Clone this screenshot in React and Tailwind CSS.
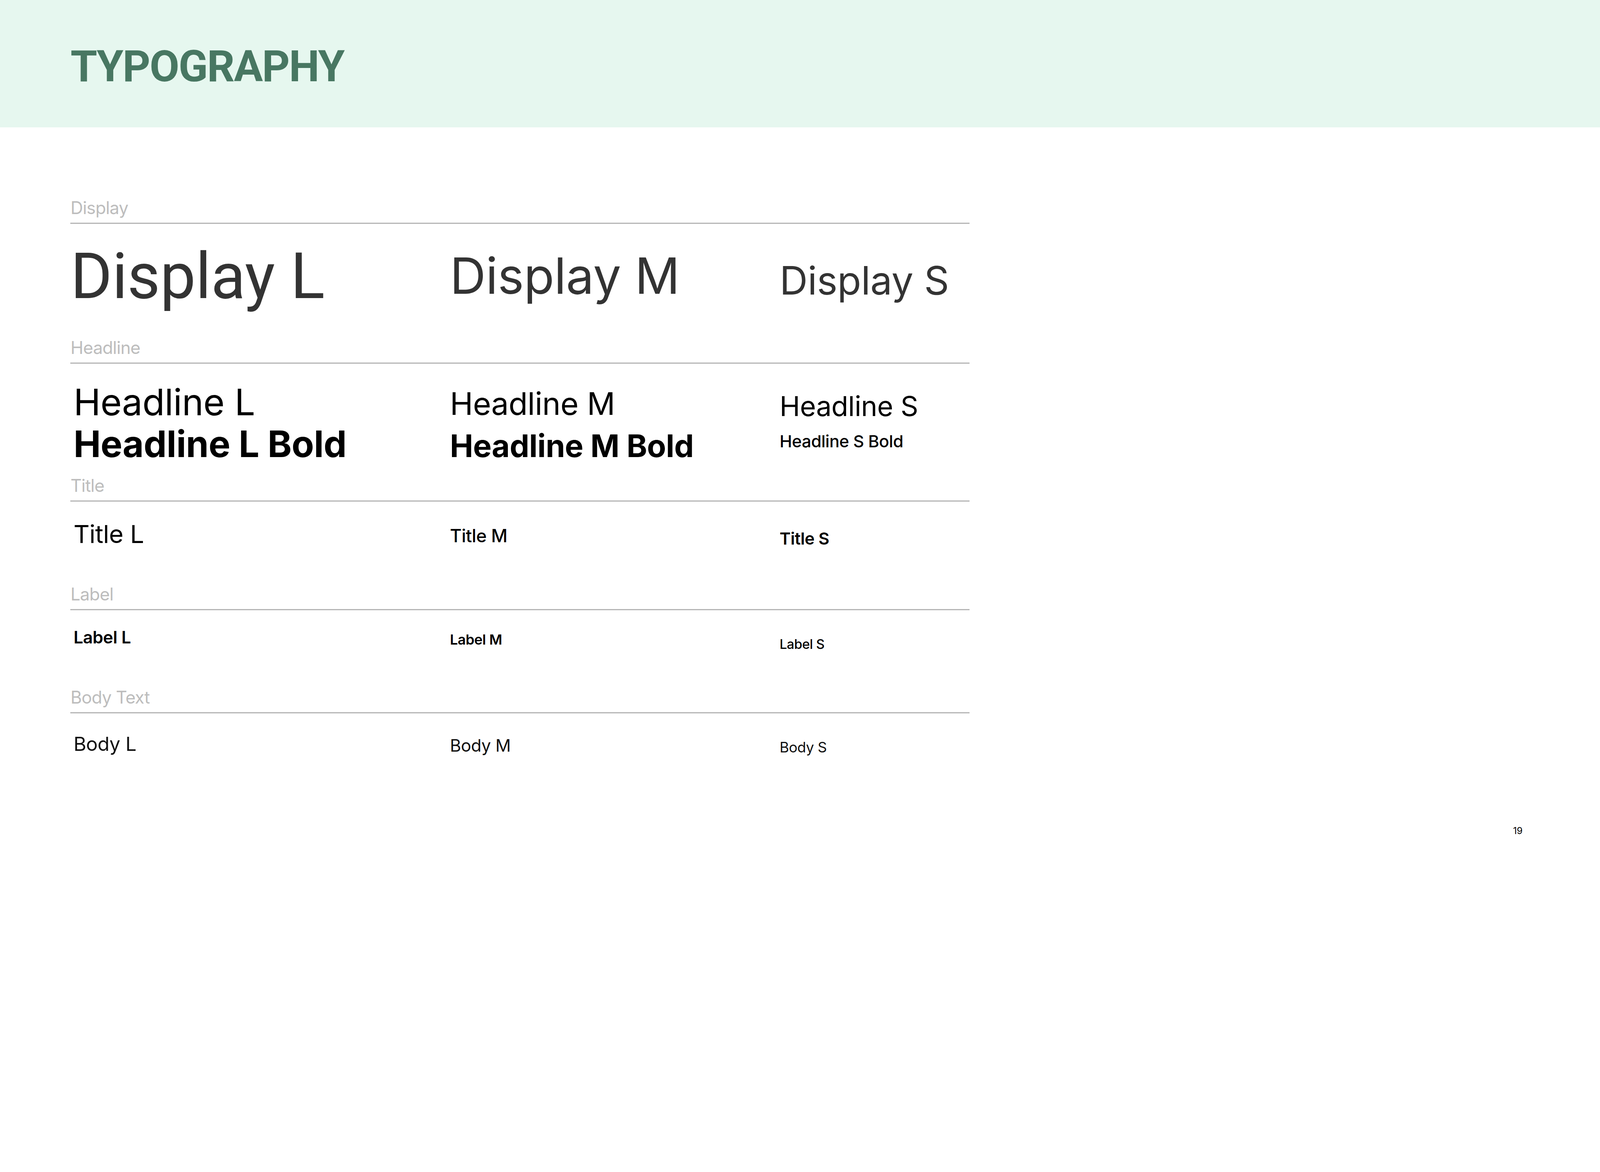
export default function App() {
  const inter = { fontFamily: "Inter, 'Noto Sans', sans-serif" };
  const z = typeof window !== "undefined" ? document.documentElement.clientWidth / 5334 : 1;
  const Label = ({ children }) => (
    <div>
      <div className="text-[58px] leading-none text-[#bdbdbd] tracking-[-0.02em]" style={inter}>{children}</div>
      <div className="mt-[20px] h-[4px] w-[2997px] bg-[#b5b5b5]" />
    </div>
  );
  return (
    <div className="w-[5334px] h-[3000px] bg-white overflow-hidden" style={{ ...inter, zoom: z }}>
      <div className="h-[425px] bg-[#e6f7ef] pl-[235px] pt-[150px]">
        <div className="text-[144px] leading-none font-bold text-[#487762] tracking-[-0.02em]" style={{ fontFamily: "Roboto, sans-serif" }}>TYPOGRAPHY</div>
      </div>
      <div className="pl-[235px]">
        <div className="pt-[239px]" />
        <Label>Display</Label>
        <div className="flex h-[384px] text-[#333333] tracking-[-0.03em]">
          <div className="w-[1265px] pt-[70px] text-[212px] leading-none" style={{ fontFamily: "Roboto, sans-serif" }}>Display L</div>
          <div className="w-[1099px] pt-[92px] text-[166px] leading-none">Display M</div>
          <div className="pt-[124px] text-[130px] leading-none">Display S</div>
        </div>
        <Label>Headline</Label>
        <div className="flex h-[378px] text-black tracking-[-0.04em]">
          <div className="w-[1265px] pl-[10px] pt-[68px] text-[122px] leading-none">
            <div>Headline L</div>
            <div className="mt-[17px] font-bold">Headline L Bold</div>
          </div>
          <div className="w-[1099px] pt-[82px] text-[104px] leading-none">
            <div>Headline M</div>
            <div className="mt-[37px] font-bold">Headline M Bold</div>
          </div>
          <div className="pt-[97px] leading-none">
            <div className="text-[92px]">Headline S</div>
            <div className="mt-[42px] text-[56px] font-medium">Headline S Bold</div>
          </div>
        </div>
        <Label>Title</Label>
        <div className="flex h-[280px] text-black leading-none tracking-[-0.04em]">
          <div className="w-[1265px] pl-[10px] pt-[67px] text-[83px]">Title L</div>
          <div className="w-[1099px] pt-[84px] text-[60px] font-medium">Title M</div>
          <div className="pt-[95px] text-[56px] font-semibold">Title S</div>
        </div>
        <Label>Label</Label>
        <div className="flex h-[262px] text-black leading-none tracking-[-0.04em]">
          <div className="w-[1265px] pl-[10px] pt-[63px] text-[57px] font-semibold">Label L</div>
          <div className="w-[1099px] pt-[74px] text-[47px] font-semibold">Label M</div>
          <div className="pt-[91px] text-[44px] font-medium">Label S</div>
        </div>
        <Label>Body Text</Label>
        <div className="flex h-[300px] text-[#111] leading-none tracking-[-0.04em]">
          <div className="w-[1265px] pl-[10px] pt-[70px] text-[65px]">Body L</div>
          <div className="w-[1099px] pt-[79px] text-[57px]">Body M</div>
          <div className="pt-[90px] text-[48px]">Body S</div>
        </div>
      </div>
      <div className="mt-[77px] flex justify-end pr-[258px] text-[31px] leading-none text-black">19</div>
    </div>
  );
}
